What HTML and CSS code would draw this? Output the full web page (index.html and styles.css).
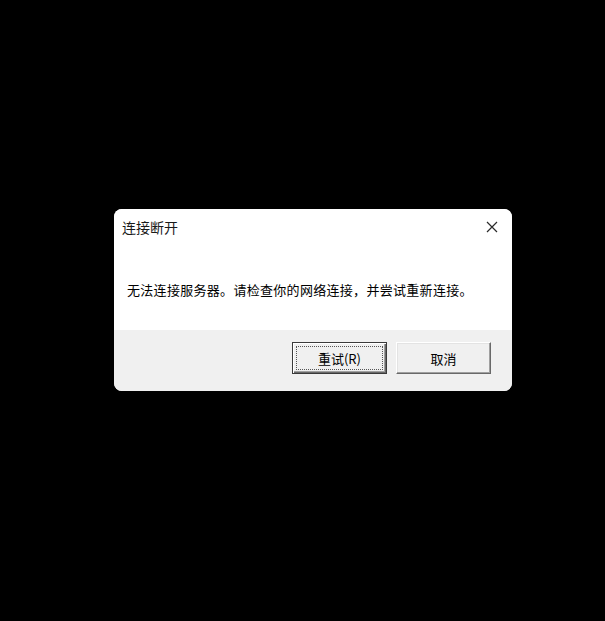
FILE: index.html
```html
<!DOCTYPE html>
<html lang="zh-CN">
<head>
<meta charset="utf-8">
<title>连接断开</title>
<link rel="stylesheet" href="styles.css">
</head>
<body>
<div class="dialog">
  <div class="main">
    <div class="titlebar">
      <span class="title">连接断开</span>
      <span class="close">
        <svg width="12" height="12" viewBox="0 0 12 12"><path d="M1 1L11 11M11 1L1 11" stroke="#2a2a2a" stroke-width="1.2" fill="none"/></svg>
      </span>
    </div>
    <div class="message">无法连接服务器。请检查你的网络连接，并尝试重新连接。</div>
  </div>
  <div class="footer">
    <button class="btn default"><span class="focus">重试(R)</span></button>
    <button class="btn">取消</button>
  </div>
</div>
</body>
</html>
```

FILE: styles.css
```css
html, body {
  margin: 0;
  padding: 0;
  background: #000;
  width: 605px;
  height: 621px;
  overflow: hidden;
  font-family: "Noto Sans CJK SC", "Noto Sans", sans-serif;
}
body {
  padding: 209px 0 0 114px;
  box-sizing: border-box;
}
.dialog {
  width: 398px;
  height: 182px;
  border-radius: 8px;
  overflow: hidden;
  background: #fff;
  display: flex;
  flex-direction: column;
}
.main {
  height: 121px;
  background: #fff;
  display: flex;
  flex-direction: column;
}
.titlebar {
  height: 36px;
  display: flex;
  align-items: center;
  justify-content: space-between;
  padding: 0 14px 0 8px;
}
.title {
  font-size: 14px;
  color: #1a1a1a;
  line-height: 16px;
}
.close {
  display: flex;
  width: 12px;
  height: 12px;
}
.message {
  margin-top: 37px;
  padding-left: 13px;
  font-size: 13px;
  letter-spacing: 0.3px;
  line-height: 16px;
  color: #000;
}
.footer {
  flex: 1;
  background: #f0f0f0;
  display: flex;
  justify-content: flex-end;
  align-items: flex-start;
  padding: 12px 21px 0 0;
  gap: 9px;
}
.btn {
  width: 95px;
  height: 32px;
  margin: 0;
  padding: 0;
  background: #f0f0f0;
  font-family: inherit;
  font-size: 13px;
  color: #000;
  border: none;
  border-top: 1px solid #fff;
  border-left: 1px solid #fff;
  border-right: 1px solid #696969;
  border-bottom: 1px solid #696969;
  box-shadow: inset -1px -1px 0 #a0a0a0, inset 1px 1px 0 #e3e3e3;
  display: flex;
  align-items: center;
  justify-content: center;
}
.btn.default {
  border: 1px solid #3a3a3a;
  box-shadow: inset 1px 1px 0 #fff, inset -1px -1px 0 #696969, inset -2px -2px 0 #a0a0a0;
}
.focus {
  display: flex;
  align-items: center;
  justify-content: center;
  width: 87px;
  height: 24px;
  box-sizing: border-box;
  border: 1px dotted #555;
}
```
